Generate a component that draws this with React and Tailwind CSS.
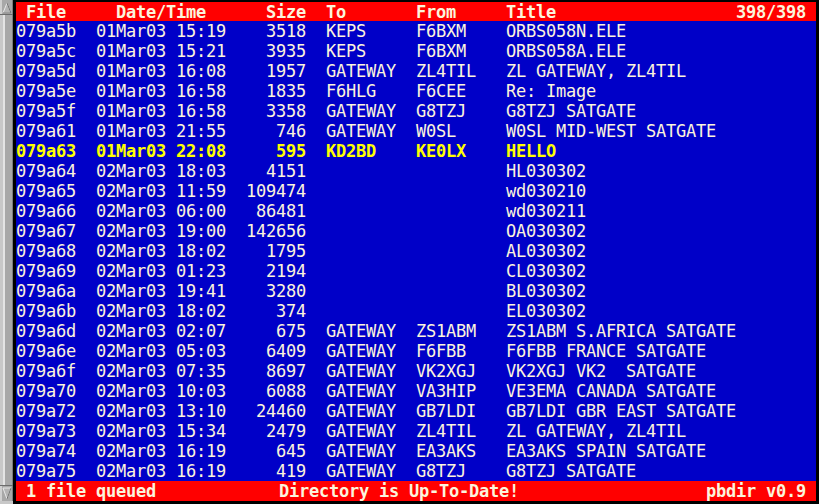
const rows = [
  ["079a5b", "01Mar03 15:19", "3518", "KEPS", "F6BXM", "ORBS058N.ELE"],
  ["079a5c", "01Mar03 15:21", "3935", "KEPS", "F6BXM", "ORBS058A.ELE"],
  ["079a5d", "01Mar03 16:08", "1957", "GATEWAY", "ZL4TIL", "ZL GATEWAY, ZL4TIL"],
  ["079a5e", "01Mar03 16:58", "1835", "F6HLG", "F6CEE", "Re: Image"],
  ["079a5f", "01Mar03 16:58", "3358", "GATEWAY", "G8TZJ", "G8TZJ SATGATE"],
  ["079a61", "01Mar03 21:55", "746", "GATEWAY", "W0SL", "W0SL MID-WEST SATGATE"],
  ["079a63", "01Mar03 22:08", "595", "KD2BD", "KE0LX", "HELLO", true],
  ["079a64", "02Mar03 18:03", "4151", "", "", "HL030302"],
  ["079a65", "02Mar03 11:59", "109474", "", "", "wd030210"],
  ["079a66", "02Mar03 06:00", "86481", "", "", "wd030211"],
  ["079a67", "02Mar03 19:00", "142656", "", "", "OA030302"],
  ["079a68", "02Mar03 18:02", "1795", "", "", "AL030302"],
  ["079a69", "02Mar03 01:23", "2194", "", "", "CL030302"],
  ["079a6a", "02Mar03 19:41", "3280", "", "", "BL030302"],
  ["079a6b", "02Mar03 18:02", "374", "", "", "EL030302"],
  ["079a6d", "02Mar03 02:07", "675", "GATEWAY", "ZS1ABM", "ZS1ABM S.AFRICA SATGATE"],
  ["079a6e", "02Mar03 05:03", "6409", "GATEWAY", "F6FBB", "F6FBB FRANCE SATGATE"],
  ["079a6f", "02Mar03 07:35", "8697", "GATEWAY", "VK2XGJ", "VK2XGJ VK2  SATGATE"],
  ["079a70", "02Mar03 10:03", "6088", "GATEWAY", "VA3HIP", "VE3EMA CANADA SATGATE"],
  ["079a72", "02Mar03 13:10", "24460", "GATEWAY", "GB7LDI", "GB7LDI GBR EAST SATGATE"],
  ["079a73", "02Mar03 15:34", "2479", "GATEWAY", "ZL4TIL", "ZL GATEWAY, ZL4TIL"],
  ["079a74", "02Mar03 16:19", "645", "GATEWAY", "EA3AKS", "EA3AKS SPAIN SATGATE"],
  ["079a75", "02Mar03 16:19", "419", "GATEWAY", "G8TZJ", "G8TZJ SATGATE"]
];

function ScrollBar() {
  return (
    <div className="w-[13px] h-full flex flex-col bg-[#c4c4c4]">
      <svg width="13" height="15" viewBox="0 0 13 15" className="shrink-0">
        <rect x="0" y="0" width="13" height="15" fill="#a8a8a8" />
        <rect x="0" y="0" width="2" height="15" fill="#d0d0d0" />
        <rect x="12" y="0" width="1" height="15" fill="#7c7c7c" />
        <polygon points="3,13 7,3 11,13" fill="#b4b4b4" stroke="#e8e8e8" strokeWidth="1" />
        <line x1="3" y1="13" x2="11" y2="13" stroke="#6c6c6c" />
        <line x1="7" y1="3" x2="11" y2="13" stroke="#6c6c6c" />
        <rect x="0" y="14" width="13" height="1" fill="#6c6c6c" />
      </svg>
      <div className="flex-1 flex">
        <div className="w-[3px] bg-[#c8c8c8]" />
        <div className="w-[2px] bg-[#e4e4e4]" />
        <div className="flex-1 bg-[#a8a8a8]" />
        <div className="w-[1px] bg-[#7c7c7c]" />
      </div>
      <svg width="13" height="19" viewBox="0 0 13 19" className="shrink-0">
        <rect x="0" y="0" width="13" height="19" fill="#a8a8a8" />
        <rect x="0" y="0" width="2" height="19" fill="#d0d0d0" />
        <rect x="12" y="0" width="1" height="19" fill="#7c7c7c" />
        <rect x="0" y="0" width="13" height="1" fill="#6c6c6c" />
        <polygon points="3,3 11,3 7,14" fill="#b4b4b4" stroke="#e8e8e8" strokeWidth="1" />
        <line x1="11" y1="3" x2="7" y2="14" stroke="#6c6c6c" />
        <rect x="0" y="16" width="13" height="3" fill="#c8c8c8" />
      </svg>
    </div>
  );
}

function Row({ r }) {
  const hi = r[6];
  return (
    <div
      className={
        "h-[20px] flex items-center whitespace-pre " +
        (hi ? "text-[#ffff00] font-bold" : "text-[#fcf4dc]")
      }
    >
      <span className="w-[80px]">{r[0]}</span>
      <span className="w-[130px]">{r[1]}</span>
      <span className="w-[80px] text-right">{r[2]}</span>
      <span className="w-[20px]" />
      <span className="w-[90px]">{r[3]}</span>
      <span className="w-[90px]">{r[4]}</span>
      <span className="flex-1">{r[5]}</span>
    </div>
  );
}

export default function App() {
  return (
    <div className="w-[819px] h-[504px] bg-black flex overflow-hidden font-['DejaVu_Sans_Mono','Liberation_Mono',monospace] text-[17px] tracking-[-0.235px] leading-[20px]">
      <ScrollBar />
      <div className="w-[800px] ml-[3px] pt-[2px] flex flex-col">
        <div className="h-[19px] bg-[#ff0000] text-[#fcf4dc] font-bold flex items-center whitespace-pre">
          <span className="w-[100px] pl-[10px]">File</span>
          <span className="w-[150px]">Date/Time</span>
          <span className="w-[60px]">Size</span>
          <span className="w-[90px]">To</span>
          <span className="w-[90px]">From</span>
          <span className="flex-1">Title</span>
          <span className="w-[80px]">398/398</span>
        </div>
        <div className="bg-[#0000c8]">
          {rows.map((r) => (
            <Row key={r[0]} r={r} />
          ))}
        </div>
        <div className="h-[20px] bg-[#ff0000] text-[#fcf4dc] font-bold flex items-center whitespace-pre">
          <span className="w-[263px] pl-[10px]">1 file queued</span>
          <span className="flex-1">Directory is Up-To-Date!</span>
          <span className="w-[110px]">pbdir v0.9</span>
        </div>
      </div>
    </div>
  );
}
